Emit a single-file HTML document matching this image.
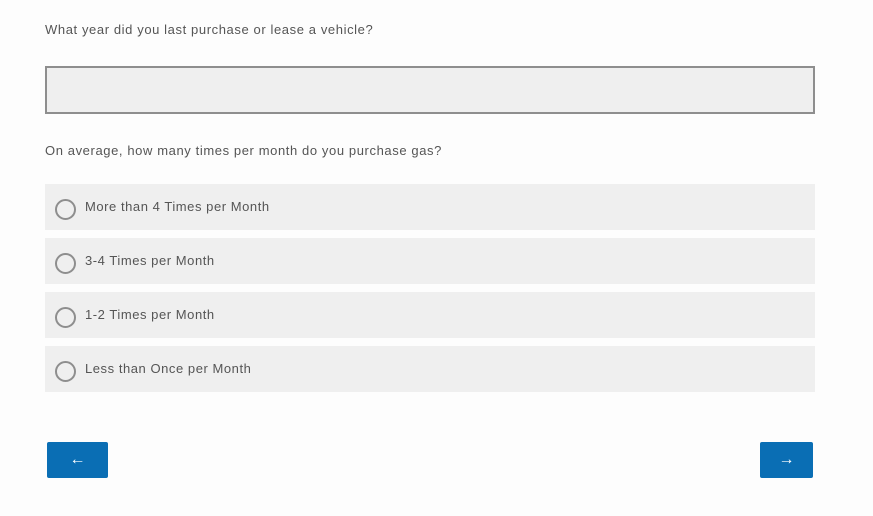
<!DOCTYPE html><html><head><style>
body{margin:0;width:873px;height:516px;background:#fdfdfd;font-family:"Liberation Sans",sans-serif;color:#555;position:relative;overflow:hidden}
.t{position:absolute;left:45px;font-size:13px;color:#555;letter-spacing:0.6px}
.inp{position:absolute;left:45px;top:66px;width:766px;height:44px;border:2px solid #8e8e8e;background:#efefef}
.opt{position:absolute;left:45px;width:770px;height:46px;background:#efefef}
.opt i{position:absolute;left:10px;top:15px;width:17px;height:17px;border:2px solid #8e8e8e;border-radius:50%}
.opt span{position:absolute;left:40px;top:15px;font-size:13px;color:#555;letter-spacing:0.55px}
.b{position:absolute;top:442px;height:36px;background:#0a6eb4;border-radius:2px;color:#fff;font-size:16px;text-align:center;line-height:36px}
</style></head><body>
<div class="t" style="top:22px">What year did you last purchase or lease a vehicle?</div>
<div class="inp"></div>
<div class="t" style="top:143px">On average, how many times per month do you purchase gas?</div>
<div class="opt" style="top:184px"><i></i><span>More than 4 Times per Month</span></div>
<div class="opt" style="top:238px"><i></i><span>3-4 Times per Month</span></div>
<div class="opt" style="top:292px"><i></i><span>1-2 Times per Month</span></div>
<div class="opt" style="top:346px"><i></i><span>Less than Once per Month</span></div>
<div class="b" style="left:47px;width:61px">←</div>
<div class="b" style="left:760px;width:53px">→</div>
</body></html>
